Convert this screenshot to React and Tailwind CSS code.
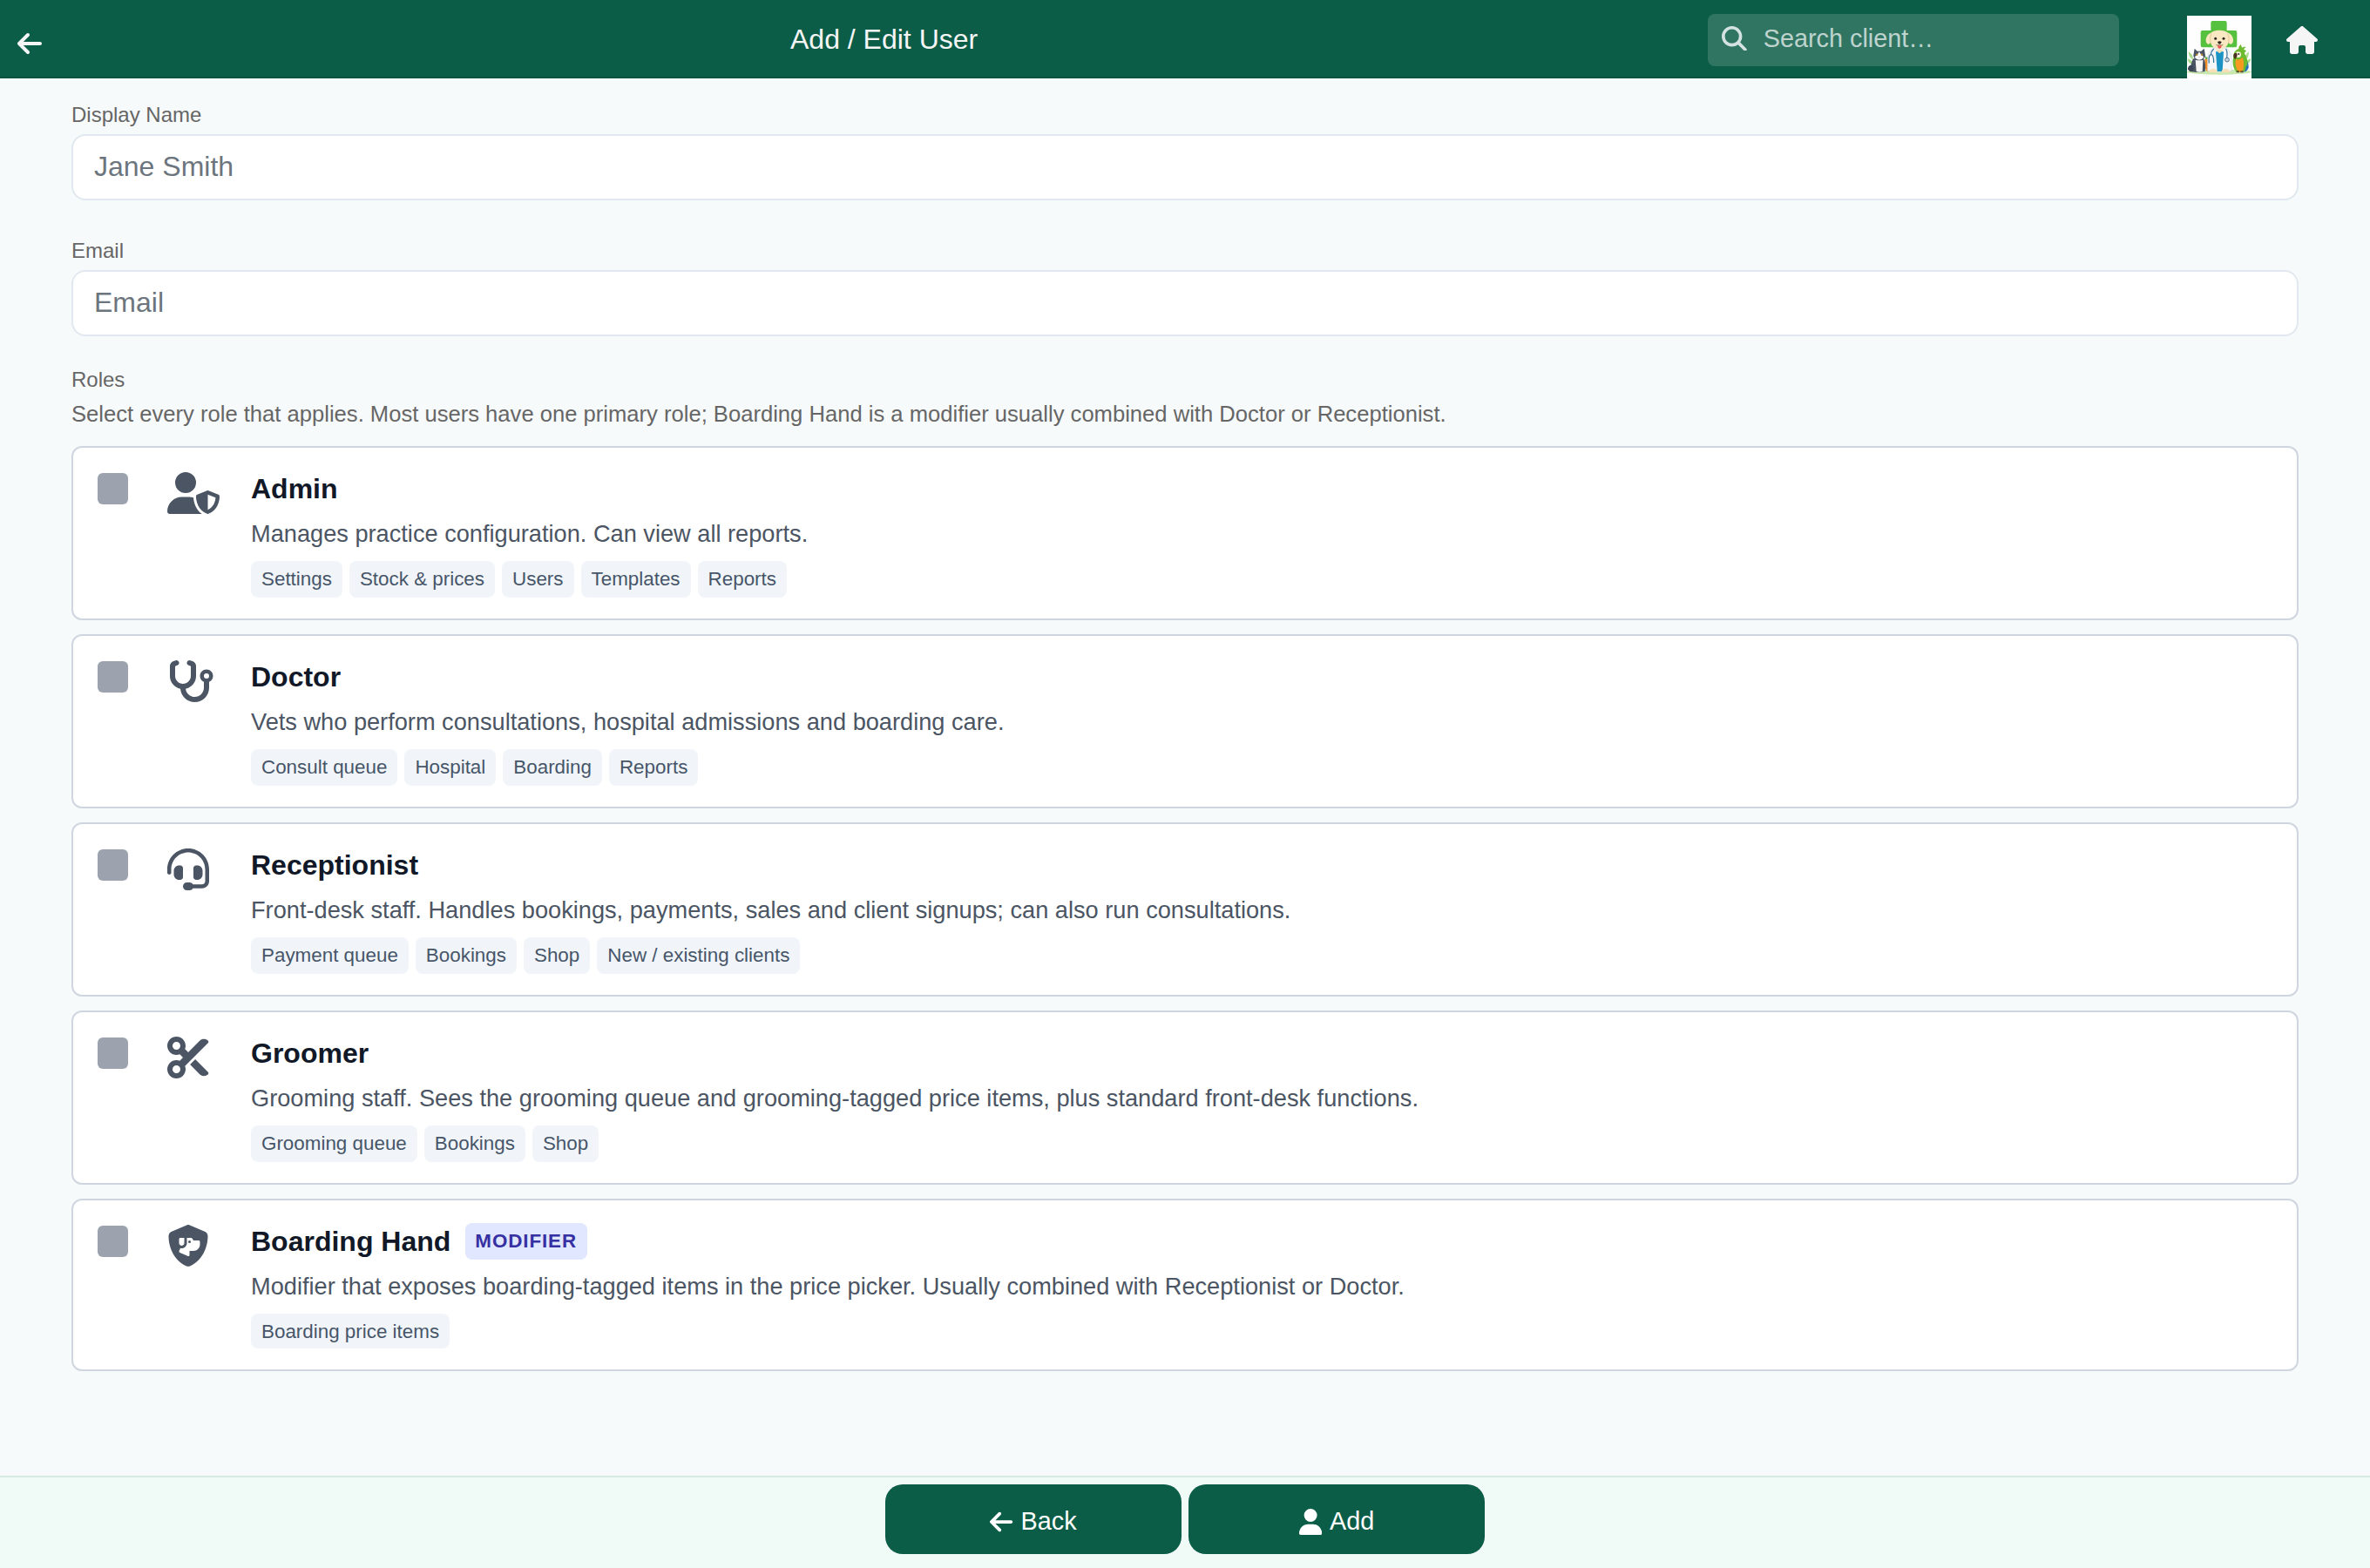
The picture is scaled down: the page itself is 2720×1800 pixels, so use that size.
import {
  FaArrowLeft,
  FaHeadset,
  FaHouse,
  FaMagnifyingGlass,
  FaScissors,
  FaShieldDog,
  FaStethoscope,
  FaUser,
  FaUserShield,
} from "react-icons/fa6";

const roles = [
  {
    name: "Admin",
    icon: <FaUserShield className="h-[48px] w-[60px]" />,
    text: "Manages practice configuration. Can view all reports.",
    tags: ["Settings", "Stock & prices", "Users", "Templates", "Reports"],
  },
  {
    name: "Doctor",
    icon: <FaStethoscope className="h-[48px] w-[54px]" />,
    text: "Vets who perform consultations, hospital admissions and boarding care.",
    tags: ["Consult queue", "Hospital", "Boarding", "Reports"],
  },
  {
    name: "Receptionist",
    icon: <FaHeadset className="h-[48px] w-[48px]" />,
    text: "Front-desk staff. Handles bookings, payments, sales and client signups; can also run consultations.",
    tags: ["Payment queue", "Bookings", "Shop", "New / existing clients"],
  },
  {
    name: "Groomer",
    icon: <FaScissors className="h-[48px] w-[48px]" />,
    text: "Grooming staff. Sees the grooming queue and grooming-tagged price items, plus standard front-desk functions.",
    tags: ["Grooming queue", "Bookings", "Shop"],
  },
  {
    name: "Boarding Hand",
    modifier: true,
    icon: <FaShieldDog className="h-[48px] w-[48px]" />,
    text: "Modifier that exposes boarding-tagged items in the price picker. Usually combined with Receptionist or Doctor.",
    tags: ["Boarding price items"],
  },
];

function ClinicLogo() {
  return (
    <svg viewBox="0 0 222 222" className="size-[74px]">
      <rect width="222" height="222" fill="#fdfefd" />
      <path d="M88 18h43q6 0 6 6v27h29q6 0 6 6v46q0 6-6 6H53q-6 0-6-6V57q0-6 6-6h29V24q0-6 6-6z" fill="#56c13f" />
      <ellipse cx="111" cy="194" rx="111" ry="9" fill="#c9e8ae" />
      <path d="M5 124q17 10 16 28Q5 144 5 124zM2 148q16 4 20 20-18 0-20-20zM212 124q-14 12-12 28 14-8 12-28zM220 148q-18 4-20 20 18-2 20-20z" fill="#a9dc8c" />
      <path d="M61 150q8-5 17 0l2 40q-8 4-14 0-7-16-5-40z" fill="#f08a24" />
      <path d="M64 150l-3-12 8 6 7-7 1 13z" fill="#5cab3c" />
      {/* cat */}
      <path d="M22 148q20-4 36 0 8 20 4 44-28 6-48 0-4-26 8-44z" fill="#4a5361" />
      <path d="M26 113l9 9h14l10-9 4 24q-2 14-21 14t-20-14z" fill="#4a5361" />
      <path d="M42 124l7 12q8 2 8 8-6 8-15 8t-15-8q0-6 8-8z" fill="#fff" />
      <path d="M29 152q13 4 26 0l-2 40q-11 4-21 0z" fill="#f6f6f4" />
      <circle cx="34" cy="134" r="3.5" fill="#b98a2e" />
      <circle cx="51" cy="134" r="3.5" fill="#b98a2e" />
      <path d="M40 141h5l-2.500 3z" fill="#e58b86" />
      <path d="M3 184q0-14 13-14l6 8-2 14q-12 4-17-8z" fill="#3d4654" />
      {/* dog in a white coat */}
      <path d="M90 112h44q18 8 19 34v44q-12 6-24 4H95q-12 2-24-4v-44q2-26 19-34z" fill="#f4f6f8" stroke="#d2d9df" strokeWidth="2" />
      <path d="M99 124h27l-4 68h-18z" fill="#1b93c4" />
      <path d="M98 116l14 14 15-14z" fill="#f5dfb5" />
      <path d="M76 190q10-12 26-3l2 9H76zM121 187q16-9 26 3v6h-28z" fill="#f7dfb6" />
      <path d="M92 114q-10 10-10 20m-6 30q-3-30 7-30 9 0 9 28M134 114q6 10 3 32" stroke="#326f97" strokeWidth="3.500" fill="none" />
      <circle cx="138" cy="152" r="7" fill="#c6d4de" stroke="#54758d" strokeWidth="3" />
      <path d="M112 50q18 0 30 9 12 4 16 18 4 18-6 21-6 1-9-6-6 22-31 22T81 92q-3 7-9 6-10-3-6-21 4-14 16-18 12-9 30-9z" fill="#fae8c2" />
      <path d="M84 62q-8 14-3 32M140 62q8 14 3 32" stroke="#e0c18b" strokeWidth="2.500" fill="none" />
      <circle cx="98" cy="79" r="4.500" fill="#2e2520" />
      <circle cx="126" cy="79" r="4.500" fill="#2e2520" />
      <path d="M105 90q7-4 14 0-1 7-7 8-6-1-7-8z" fill="#2e2520" />
      <path d="M100 101q7 3 12-2 5 5 12 2" stroke="#5b3f2c" strokeWidth="2" fill="none" />
      <path d="M105 102q7 2 14 0 0 11-7 11t-7-11z" fill="#ea5a59" />
      {/* parrot */}
      <path d="M196 140q18 20 16 38-4 14-15 16z" fill="#2272b4" />
      <path d="M160 140q0-20 18-26-1-9 8-15 0 8 4 11 6-4 13-2-7 4-8 9 7 0 9 5-6 2-6 8 12 18 10 40-6 2-7 16-3 8-13 8h-18q-18-20-10-54z" fill="#6cba2d" />
      <path d="M168 150q14 4 24-6 8 28-2 50h-12q-16-18-10-44z" fill="#f59a1f" />
      <ellipse cx="176" cy="134" rx="10" ry="10" fill="#f8f3dd" />
      <circle cx="178" cy="132" r="3" fill="#262626" />
      <path d="M171 128q-12-1-11 12 2 8 6 10 8-8 7-16z" fill="#4a2f22" />
      <path d="M170 190h10v6h-10zM184 190h10v6h-10z" fill="#5b4a3a" />
    </svg>
  );
}

function Field({ label, placeholder }) {
  return (
    <label className="block">
      <span className="mb-1 block h-9 text-[24px] leading-9 text-[#666666]">{label}</span>
      <input
        placeholder={placeholder}
        className="block h-[76px] w-full rounded-[16px] border-2 border-[#e2e8f0] bg-white px-[24px] pb-[2px] text-[32px] placeholder:text-[#6c757d]"
      />
    </label>
  );
}

function RoleCard({ role }) {
  return (
    <div
      className={`flex rounded-[12px] border-2 border-[#d0d6df] bg-white pl-[28px] ${
        role.modifier ? "h-[198px]" : "h-[200px]"
      }`}
    >
      <div className="mt-[29px] h-[36px] w-[35px] rounded-[6px] bg-[#9ca3af]" />
      <div className="mt-[28px] ml-[45px] w-[96px] text-[#4b5563]">{role.icon}</div>
      <div className="mt-[23px]">
        <div className="flex h-[48px] items-center gap-[17px]">
          <span className="text-[32px] leading-[48px] font-bold text-[#111827]">{role.name}</span>
          {role.modifier && (
            <span className="h-[42px] rounded-[8px] bg-[#e0e7ff] pr-3 pl-[11px] text-[22.4px] leading-[42px] font-bold tracking-[0.9px] text-[#3730a3]">
              MODIFIER
            </span>
          )}
        </div>
        <p className="mt-[7px] text-[27.2px] leading-[41px] text-[#4b5563]">{role.text}</p>
        <div className="mt-[11px] flex gap-2">
          {role.tags.map((tag) => (
            <span
              key={tag}
              className={`rounded-[8px] bg-[#f1f5f9] px-3 text-[22.4px] text-[#475569] ${
                role.modifier ? "h-[40px] leading-[41px]" : "h-[42px] leading-[42px]"
              }`}
            >
              {tag}
            </span>
          ))}
        </div>
      </div>
    </div>
  );
}

export default function App() {
  return (
    <div className="flex h-[1800px] flex-col bg-[#f7fafb] font-['Liberation_Sans',Arial,sans-serif]">
      <header className="flex h-[90px] shrink-0 items-start border-b-2 border-[#0a5240] bg-[#0b5d47] text-[#f5f5f5]">
        <FaArrowLeft className="mt-[34px] ml-[20px] h-[32px] w-[28px]" />
        <h1 className="mt-[21px] ml-[859px] w-[1053px] text-[32px] leading-[48px]">Add / Edit User</h1>
        <div className="mt-[16px] flex h-[60px] w-[472px] items-center rounded-[8px] bg-white/15 pl-[16px]">
          <FaMagnifyingGlass className="mt-[-4px] size-[28.8px] text-white/80" />
          <span className="mt-[-2px] ml-[19px] text-[28.8px] text-white/70">Search client…</span>
        </div>
        <div className="mt-[18px] ml-[78px] h-[74px]">
          <ClinicLogo />
        </div>
        <FaHouse className="mt-[30px] ml-[40px] h-[32px] w-[36px]" />
      </header>

      <main className="flex-1 px-[82px] pt-6">
        <Field label="Display Name" placeholder="Jane Smith" />
        <div className="h-10" />
        <Field label="Email" placeholder="Email" />
        <div className="mt-8 h-9 text-[24px] leading-9 text-[#666666]">Roles</div>
        <p className="mt-[2px] h-[38px] text-[25.6px] leading-[38px] text-[#666666]">
          Select every role that applies. Most users have one primary role; Boarding Hand is a modifier usually
          combined with Doctor or Receptionist.
        </p>
        <div className="mt-[18px] flex flex-col gap-4">
          {roles.map((role) => (
            <RoleCard key={role.name} role={role} />
          ))}
        </div>
      </main>

      <footer className="flex h-[106px] shrink-0 justify-center gap-2 border-t-2 border-[#d5ebe1] bg-[#f0faf6] pt-2 text-[28.8px] text-white">
        <button className="flex h-[80px] w-[340px] items-center justify-center gap-[9px] rounded-[20px] bg-[#0b5d47]">
          <FaArrowLeft className="mt-[6px] h-[30px] w-[26.25px]" />
          <span className="mt-[5px]">Back</span>
        </button>
        <button className="flex h-[80px] w-[340px] items-center justify-center gap-[9px] rounded-[20px] bg-[#0b5d47]">
          <FaUser className="mt-[6px] h-[30px] w-[26.25px]" />
          <span className="mt-[5px]">Add</span>
        </button>
      </footer>
    </div>
  );
}
